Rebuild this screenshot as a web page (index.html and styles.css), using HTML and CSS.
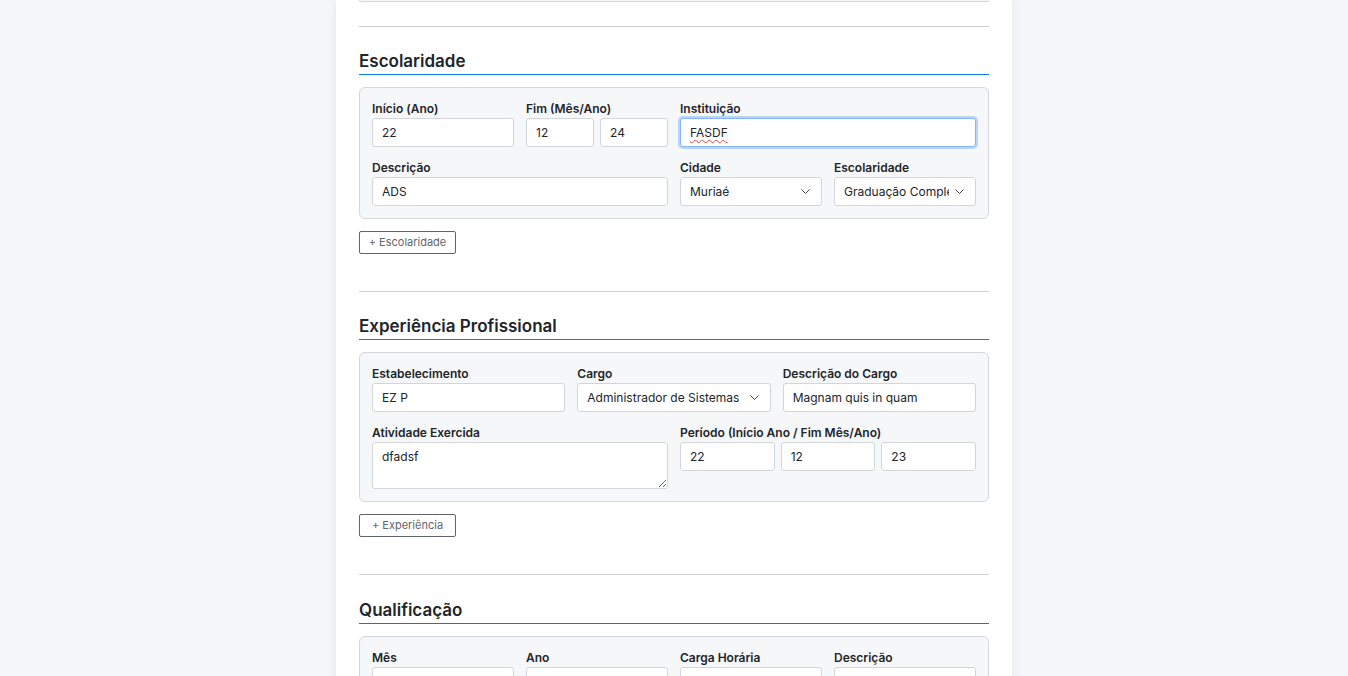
FILE: index.html
```html
<!DOCTYPE html>
<html lang="pt-BR">
<head>
<meta charset="utf-8">
<title>Currículo</title>
<link rel="stylesheet" href="styles.css">
</head>
<body>
<main class="card">
  <div class="prev-box"></div>

  <section class="section">
    <div class="divider"></div>
    <h2 class="section-title is-active">Escolaridade</h2>
    <div class="entry grid-4">
      <div class="field">
        <label class="label">Início (Ano)</label>
        <input class="control" type="text" value="22">
      </div>
      <div class="field">
        <label class="label">Fim (Mês/Ano)</label>
        <div class="split">
          <input class="control" type="text" value="12">
          <input class="control" type="text" value="24">
        </div>
      </div>
      <div class="field span-2">
        <label class="label">Instituição</label>
        <div class="control is-focus"><span class="misspelled">FASDF</span></div>
      </div>
      <div class="field span-2">
        <label class="label">Descrição</label>
        <input class="control" type="text" value="ADS">
      </div>
      <div class="field">
        <label class="label">Cidade</label>
        <div class="select-wrap">
          <select class="control select"><option>Muriaé</option></select>
          <svg class="chevron" width="9" height="5" viewBox="0 0 9 5"><polyline points="0.5,0.5 4.5,4.5 8.5,0.5" fill="none" stroke="#444" stroke-width="1"/></svg>
        </div>
      </div>
      <div class="field">
        <label class="label">Escolaridade</label>
        <div class="select-wrap">
          <select class="control select"><option>Graduação Completa</option></select>
          <svg class="chevron" width="9" height="5" viewBox="0 0 9 5"><polyline points="0.5,0.5 4.5,4.5 8.5,0.5" fill="none" stroke="#444" stroke-width="1"/></svg>
        </div>
      </div>
    </div>
    <button class="add-btn" type="button">+ Escolaridade</button>
  </section>

  <section class="section">
    <div class="divider"></div>
    <h2 class="section-title">Experiência Profissional</h2>
    <div class="entry grid-6">
      <div class="field span-2">
        <label class="label">Estabelecimento</label>
        <input class="control" type="text" value="EZ P">
      </div>
      <div class="field span-2">
        <label class="label">Cargo</label>
        <div class="select-wrap">
          <select class="control select"><option>Administrador de Sistemas</option></select>
          <svg class="chevron" width="9" height="5" viewBox="0 0 9 5"><polyline points="0.5,0.5 4.5,4.5 8.5,0.5" fill="none" stroke="#444" stroke-width="1"/></svg>
        </div>
      </div>
      <div class="field span-2">
        <label class="label">Descrição do Cargo</label>
        <input class="control" type="text" value="Magnam quis in quam">
      </div>
      <div class="field span-3">
        <label class="label">Atividade Exercida</label>
        <textarea class="control textarea">dfadsf</textarea>
      </div>
      <div class="field span-3">
        <label class="label">Período (Início Ano / Fim Mês/Ano)</label>
        <div class="split">
          <input class="control" type="text" value="22">
          <input class="control" type="text" value="12">
          <input class="control" type="text" value="23">
        </div>
      </div>
    </div>
    <button class="add-btn" type="button">+ Experiência</button>
  </section>

  <section class="section">
    <div class="divider"></div>
    <h2 class="section-title">Qualificação</h2>
    <div class="entry grid-4">
      <div class="field">
        <label class="label">Mês</label>
        <div class="control"></div>
      </div>
      <div class="field">
        <label class="label">Ano</label>
        <div class="control"></div>
      </div>
      <div class="field">
        <label class="label">Carga Horária</label>
        <div class="control"></div>
      </div>
      <div class="field">
        <label class="label">Descrição</label>
        <div class="control"></div>
      </div>
    </div>
  </section>
</main>
</body>
</html>
```

FILE: styles.css
```css
* { box-sizing: border-box; }

html, body {
  margin: 0;
  padding: 0;
}

body {
  background: #f5f7fa;
  font-family: Inter, "Noto Sans", "Liberation Sans", sans-serif;
  color: #212529;
  height: 676px;
  overflow: hidden;
}

.card {
  width: 676px;
  margin: 0 auto;
  padding: 0 23px 40px;
  background: #ffffff;
  box-shadow: 0 0 12px rgba(0, 0, 0, 0.08);
  min-height: 900px;
}

.prev-box {
  height: 2px;
  border: 1px solid #d3d7dc;
  border-top: none;
  border-radius: 0 0 6px 6px;
  background: #f6f7f9;
}

.section {
  display: flex;
  flex-direction: column;
  align-items: flex-start;
}

.divider {
  align-self: stretch;
  height: 1px;
  background: #cfcfcf;
  margin-top: 24px;
}

.section + .section .divider {
  margin-top: 37px;
}

.section-title {
  align-self: stretch;
  margin: 22px 0 0;
  padding: 1px 0 2px;
  font-size: 17px;
  line-height: 22px;
  font-weight: 600;
  color: #212529;
  border-bottom: 1px solid #2a6cc0;
}

.section + .section + .section .section-title {
  margin-top: 23px;
}

.section-title.is-active {
  border-bottom-color: #0b7bf0;
}

.entry {
  align-self: stretch;
  margin-top: 12px;
  padding: 13px 12px 12px;
  background: #f6f7f9;
  border: 1px solid #d3d7dc;
  border-radius: 6px;
  display: grid;
  column-gap: 12px;
  row-gap: 13px;
}

.grid-4 { grid-template-columns: repeat(4, 1fr); }
.grid-6 { grid-template-columns: repeat(6, 1fr); }

.span-2 { grid-column: span 2; }
.span-3 { grid-column: span 3; }

.field {
  display: flex;
  flex-direction: column;
  min-width: 0;
}

.label {
  display: block;
  font-size: 12px;
  line-height: 15px;
  font-weight: 600;
  color: #212529;
  margin-bottom: 2px;
  white-space: nowrap;
}

.control {
  display: block;
  width: 100%;
  height: 29px;
  margin: 0;
  padding: 0 9px;
  border: 1px solid #d2d6db;
  border-radius: 3px;
  background: #ffffff;
  font-family: inherit;
  font-size: 12px;
  line-height: 27px;
  color: #212529;
  outline: none;
}

.control.is-focus {
  border-color: #86b7fe;
  box-shadow: 0 0 0 2px rgba(13, 110, 253, 0.25);
}

.misspelled {
  text-decoration: underline wavy #e0463f;
  text-decoration-thickness: 1px;
  text-underline-offset: 2px;
}

.split {
  display: flex;
  gap: 6px;
}

.split .control {
  flex: 1 1 0;
  min-width: 0;
}

.select-wrap {
  position: relative;
}

.select {
  -webkit-appearance: none;
  appearance: none;
  padding-right: 26px;
  text-overflow: clip;
  white-space: nowrap;
  overflow: hidden;
}

.chevron {
  position: absolute;
  right: 12px;
  top: 12px;
  pointer-events: none;
}

.textarea {
  height: 47px;
  padding: 6px 9px;
  line-height: 15px;
  resize: vertical;
}

.add-btn {
  margin-top: 12px;
  width: 97px;
  height: 23px;
  padding: 0;
  border: 1px solid #5f656b;
  border-radius: 2px;
  background: #ffffff;
  color: #5f656b;
  font-family: inherit;
  font-size: 11px;
  line-height: 21px;
  cursor: pointer;
}
```
